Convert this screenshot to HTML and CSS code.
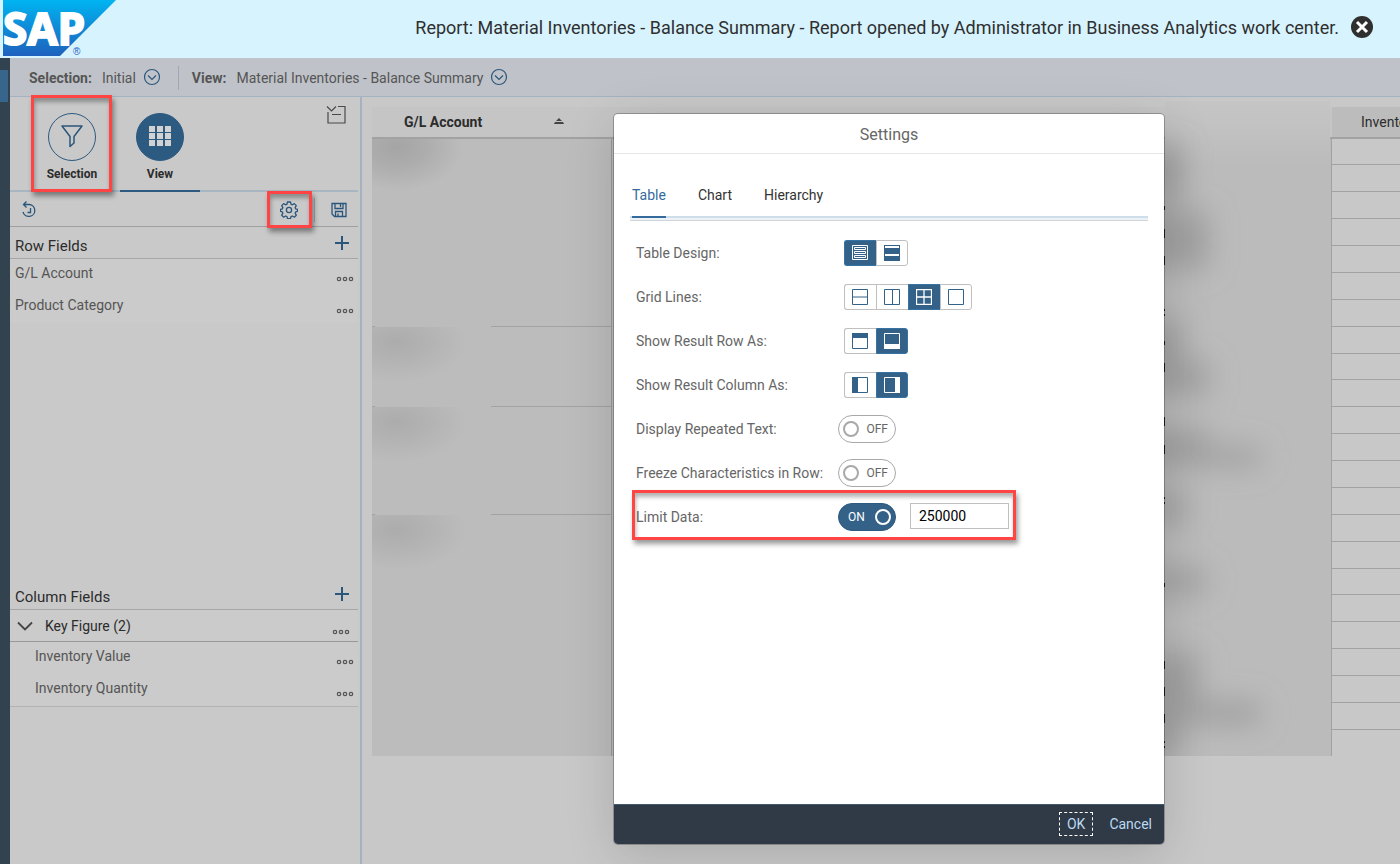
FILE: index.html
```html
<!DOCTYPE html>
<html lang="en">
<head>
    <meta charset="UTF-8">
    <meta name="viewport" content="width=device-width, initial-scale=1.0">
    <title>Material Inventories - Balance Summary</title>
    <link rel="stylesheet" href="styles.css">
</head>
<body>
    <!-- Shared icons -->
    <svg class="defs" width="0" height="0" aria-hidden="true">
        <symbol id="dots" viewBox="0 0 18 6">
            <g fill="none" stroke="#555" stroke-width="1.2"><circle cx="3" cy="3" r="1.7"/><circle cx="9" cy="3" r="1.7"/><circle cx="15" cy="3" r="1.7"/></g>
        </symbol>
        <symbol id="drop" viewBox="0 0 18 18">
            <g fill="none" stroke="#2b567b" stroke-width="1.2"><circle cx="9" cy="9" r="7.5"/><path d="M5 7.5l4 4 4-4"/></g>
        </symbol>
        <symbol id="plus" viewBox="0 0 16 16">
            <path d="M8 1v14M1 8h14" stroke="#2b567b" stroke-width="2"/>
        </symbol>
    </svg>

    <header class="banner">
        <svg class="logo" width="116" height="58" viewBox="0 0 116 58" role="img" aria-label="SAP">
            <defs>
                <linearGradient id="sapBlue" x1="0" y1="0" x2="0" y2="1">
                    <stop offset="0" stop-color="#00b4f1"/>
                    <stop offset="1" stop-color="#1e61bd"/>
                </linearGradient>
            </defs>
            <path d="M3 0h113L60 56H3z" fill="url(#sapBlue)"/>
            <text class="logo-text" x="3" y="45">SAP</text>
            <text class="logo-mark" x="73" y="55">®</text>
        </svg>
        <p>Report: Material Inventories - Balance Summary - Report opened by Administrator in Business Analytics work center.</p>
        <button type="button" class="icon-btn" aria-label="Close">
            <svg width="22" height="22" viewBox="0 0 22 22"><circle cx="11" cy="11" r="11" fill="#2f2f2f"/><path d="M6 6l10 10M16 6L6 16" stroke="#fff" stroke-width="3"/></svg>
        </button>
    </header>

    <div class="workspace">
        <div class="rail"><span class="rail-active"></span></div>
        <div class="content">
            <div class="context-bar">
                <strong>Selection:</strong>
                <span>Initial</span>
                <button type="button" class="icon-btn" aria-label="Choose selection"><svg width="18" height="18"><use href="#drop"/></svg></button>
                <span class="separator"></span>
                <strong>View:</strong>
                <span>Material Inventories - Balance Summary</span>
                <button type="button" class="icon-btn" aria-label="Choose view"><svg width="18" height="18"><use href="#drop"/></svg></button>
            </div>

            <div class="columns">
                <aside class="panel">
                    <nav class="panel-tabs">
                        <button type="button" class="panel-tab">
                            <span class="circle">
                                <svg width="24" height="24" viewBox="0 0 24 24"><path d="M2 1h20L14 11.500V18l-4 3.500v-10z" fill="none" stroke="#2b567b" stroke-width="1.5" stroke-linejoin="round"/></svg>
                            </span>
                            Selection
                            <span class="highlight highlight-tab"></span>
                        </button>
                        <button type="button" class="panel-tab active">
                            <span class="circle">
                                <svg width="24" height="24" viewBox="0 0 24 24"><path d="M1 1h6v6H1zM9 1h6v6H9zM17 1h6v6h-6zM1 8h6v6H1zM9 8h6v6H9zM17 8h6v6h-6zM1 15h6v6H1zM9 15h6v6H9zM17 15h6v6h-6z" fill="#d2d2d2"/></svg>
                            </span>
                            View
                        </button>
                        <button type="button" class="icon-btn collapse" aria-label="Collapse all">
                            <svg width="20" height="20" viewBox="0 0 20 20"><path d="M1 1.500l4.500 4.500L10 1.500M12 1.500h7v16.500H2V7M6 9.500h9" fill="none" stroke="#4a4a4a" stroke-width="1.2"/></svg>
                        </button>
                    </nav>

                    <div class="toolbar">
                        <button type="button" class="icon-btn undo" aria-label="Reset">
                            <svg width="18" height="18" viewBox="0 0 18 18"><path d="M3 3.500h5.500a6 6 0 1 1-6.500 7.500M5.500.5l-3 3 3 3M9.500 7v4.500H6.500" fill="none" stroke="#2b567b" stroke-width="1.3"/></svg>
                        </button>
                        <button type="button" class="icon-btn settings" aria-label="Settings">
                            <svg width="18" height="18" viewBox="0 0 18 18"><g fill="none" stroke="#2b567b" stroke-width="1.3" stroke-linejoin="round"><path d="M7.500 1h3l.5 2.200 1.300.6 2-1.200 2 2-1.200 2 .6 1.300 1.800.4v2l-1.800.6-.6 1.300 1.200 2-2 2-2-1.200-1.300.6-.5 2h-3l-.5-2-1.300-.6-2 1.200-2-2 1.200-2-.6-1.300-1.800-.6v-2l1.800-.4.6-1.300-1.200-2 2-2 2 1.200L7 3.200z"/><circle cx="9" cy="9" r="2.600"/></g></svg>
                            <span class="highlight highlight-settings"></span>
                        </button>
                        <span class="separator"></span>
                        <button type="button" class="icon-btn" aria-label="Save">
                            <svg width="16" height="16" viewBox="0 0 16 16"><path d="M1 1.500h14v13H3.500L1 12zM4 1.500v5h8v-5M4.500 14.500v-5h7v5M7 14v-2.500M9.500 2v3" fill="none" stroke="#2b567b" stroke-width="1.300"/></svg>
                        </button>
                    </div>

                    <section class="fields row-fields">
                        <h2>Row Fields <button type="button" class="icon-btn" aria-label="Add row field"><svg width="16" height="16"><use href="#plus"/></svg></button></h2>
                        <ul>
                            <li>G/L Account <button type="button" class="icon-btn more" aria-label="More"><svg width="18" height="6"><use href="#dots"/></svg></button></li>
                            <li>Product Category <button type="button" class="icon-btn more" aria-label="More"><svg width="18" height="6"><use href="#dots"/></svg></button></li>
                        </ul>
                    </section>

                    <section class="fields column-fields">
                        <h2>Column Fields <button type="button" class="icon-btn" aria-label="Add column field"><svg width="16" height="16"><use href="#plus"/></svg></button></h2>
                        <h3>
                            <svg width="16" height="10" viewBox="0 0 16 10"><path d="M1 1.500l7 7 7-7" fill="none" stroke="#444" stroke-width="1.800"/></svg>
                            Key Figure (2)
                            <button type="button" class="icon-btn more" aria-label="More"><svg width="18" height="6"><use href="#dots"/></svg></button>
                        </h3>
                        <ul>
                            <li>Inventory Value <button type="button" class="icon-btn more" aria-label="More"><svg width="18" height="6"><use href="#dots"/></svg></button></li>
                            <li>Inventory Quantity <button type="button" class="icon-btn more" aria-label="More"><svg width="18" height="6"><use href="#dots"/></svg></button></li>
                        </ul>
                    </section>
                </aside>

                <main class="report">
                    <table>
                        <colgroup>
                            <col class="col-account">
                            <col class="col-product">
                            <col class="col-value">
                        </colgroup>
                        <thead>
                            <tr>
                                <th class="account"><span>G/L Account</span><svg width="10" height="8" viewBox="0 0 10 8"><path d="M5 0l3 3H2zM1 4h8l1 2H0z" fill="#444"/></svg></th>
                                <th></th>
                                <th class="value">Inventory Value</th>
                            </tr>
                        </thead>
                        <tbody>
                            <tr>
                                <td rowspan="7" class="masked first"></td>
                                <td rowspan="23" class="product">
                                    <!-- Masked product texts -->
                                    <svg class="smear" width="167" height="655" viewBox="0 0 167 655" aria-hidden="true">
                                        <defs>
                                            <filter id="soft" x="-50%" y="-50%" width="200%" height="200%"><feGaussianBlur stdDeviation="14"/></filter>
                                            <linearGradient id="fade" x1="0" y1="0" x2="0" y2="1">
                                                <stop offset="0" stop-color="#c5c5c5"/>
                                                <stop offset=".4" stop-color="#c2c2c2"/>
                                                <stop offset="1" stop-color="#bbb"/>
                                            </linearGradient>
                                        </defs>
                                        <path d="M1 0h165v64H1z" fill="url(#fade)"/>
                                        <g fill="#909090" filter="url(#soft)">
                                            <path d="M-20 45h38v55h-38zM-20 110h65v58h-65zM-20 220h38v40h-38zM-20 260h65v34h-65zM-20 328h65v22h-65zM-20 346h116v20h-116zM-20 392h42v30h-42zM-20 468h62v24h-62zM-20 552h55v50h-55zM-20 600h116v24h-116zM-20 622h35v33h-35z" opacity=".6"/>
                                        </g>
                                        <path d="M.5 105v4M.5 128v9M.5 155v9M.5 208v2M.5 213v2M.5 240v4M.5 262v9M.5 316v9M.5 344v9M.5 396v2M.5 401v2M.5 482v4M.5 560v8M.5 586v9M.5 613v9M.5 640v2M.5 645v2" stroke="#222"/>
                                    </svg>
                                </td>
                                <td></td>
                            </tr>
                            <tr><td></td></tr>
                            <tr><td></td></tr>
                            <tr><td></td></tr>
                            <tr><td></td></tr>
                            <tr><td></td></tr>
                            <tr><td></td></tr>
                            <tr><td rowspan="3" class="masked"></td><td></td></tr>
                            <tr><td></td></tr>
                            <tr><td></td></tr>
                            <tr><td rowspan="4" class="masked"></td><td></td></tr>
                            <tr><td></td></tr>
                            <tr><td></td></tr>
                            <tr><td></td></tr>
                            <tr><td rowspan="9" class="masked last"></td><td></td></tr>
                            <tr><td></td></tr>
                            <tr><td></td></tr>
                            <tr><td></td></tr>
                            <tr><td></td></tr>
                            <tr><td></td></tr>
                            <tr><td></td></tr>
                            <tr><td></td></tr>
                            <tr><td></td></tr>
                        </tbody>
                    </table>
                </main>
            </div>
        </div>
    </div>

    <form class="dialog" role="dialog" aria-labelledby="dialogTitle">
        <h1 id="dialogTitle">Settings</h1>
        <nav class="dialog-tabs">
            <a href="#table" class="active">Table</a>
            <a href="#chart">Chart</a>
            <a href="#hierarchy">Hierarchy</a>
        </nav>

        <div class="settings-list" id="table">
            <div class="setting">
                <span id="designLabel">Table Design:</span>
                <div class="segmented" role="radiogroup" aria-labelledby="designLabel">
                    <label><input type="radio" name="design" aria-label="Standard" checked>
                        <svg width="16" height="16" viewBox="0 0 16 16"><path d="M.5.5h15v14H.5zM2.500 2.500h11v2h-11zM2.500 6.500h11v2h-11zM2.500 10.500h11v2h-11z" fill="none" stroke="#fff"/></svg></label>
                    <label><input type="radio" name="design" aria-label="Alternating">
                        <svg width="16" height="16" viewBox="0 0 16 16"><path d="M0 0h16v16H0z" fill="#346187"/><path d="M1 1h14v2H1zM1 9h14v2H1z" fill="#fff"/></svg></label>
                </div>
            </div>
            <div class="setting">
                <span id="gridLabel">Grid Lines:</span>
                <div class="segmented" role="radiogroup" aria-labelledby="gridLabel">
                    <label><input type="radio" name="grid" aria-label="Horizontal">
                        <svg width="16" height="16" viewBox="0 0 16 16"><path d="M.5.5h15v15H.5zM0 8h16" fill="none" stroke="#346187"/></svg></label>
                    <label><input type="radio" name="grid" aria-label="Vertical">
                        <svg width="16" height="16" viewBox="0 0 16 16"><path d="M.5.5h15v15H.5zM8.500 0v16" fill="none" stroke="#346187"/></svg></label>
                    <label><input type="radio" name="grid" aria-label="All" checked>
                        <svg width="16" height="16" viewBox="0 0 16 16"><path d="M.5.5h15v15H.5zM0 8h16M8 0v16" fill="none" stroke="#fff" stroke-width="1.300"/></svg></label>
                    <label><input type="radio" name="grid" aria-label="None">
                        <svg width="16" height="16" viewBox="0 0 16 16"><path d="M.5.5h15v15H.5z" fill="none" stroke="#346187"/></svg></label>
                </div>
            </div>
            <div class="setting">
                <span id="rowLabel">Show Result Row As:</span>
                <div class="segmented" role="radiogroup" aria-labelledby="rowLabel">
                    <label><input type="radio" name="row" aria-label="First row">
                        <svg width="16" height="16" viewBox="0 0 16 16"><path d="M.5.5h15v15H.5z" fill="none" stroke="#346187"/><path d="M0 0h16v5H0z" fill="#346187"/></svg></label>
                    <label><input type="radio" name="row" aria-label="Last row" checked>
                        <svg width="16" height="16" viewBox="0 0 16 16"><path d="M.5.5h15v15H.5z" fill="none" stroke="#fff"/><path d="M0 11h16v5H0z" fill="#fff"/></svg></label>
                </div>
            </div>
            <div class="setting">
                <span id="columnLabel">Show Result Column As:</span>
                <div class="segmented" role="radiogroup" aria-labelledby="columnLabel">
                    <label><input type="radio" name="column" aria-label="First column">
                        <svg width="16" height="16" viewBox="0 0 16 16"><path d="M.5.5h15v15H.5z" fill="none" stroke="#346187"/><path d="M0 0h6v16H0z" fill="#346187"/></svg></label>
                    <label><input type="radio" name="column" aria-label="Last column" checked>
                        <svg width="16" height="16" viewBox="0 0 16 16"><path d="M.5.5h15v15H.5z" fill="none" stroke="#fff"/><path d="M11 0h5v16h-5z" fill="#fff"/></svg></label>
                </div>
            </div>
            <div class="setting">
                <label for="repeated">Display Repeated Text:</label>
                <label class="switch"><input type="checkbox" id="repeated"><span>OFF</span></label>
            </div>
            <div class="setting">
                <label for="freeze">Freeze Characteristics in Row:</label>
                <label class="switch"><input type="checkbox" id="freeze"><span>OFF</span></label>
            </div>
            <div class="setting">
                <label for="limit">Limit Data:</label>
                <label class="switch"><input type="checkbox" id="limit" checked><span>ON</span></label>
                <input type="text" class="limit-value" value="250000" aria-label="Maximum number of rows">
                <span class="highlight highlight-limit"></span>
            </div>
        </div>

        <footer>
            <button type="button" class="focused">OK</button>
            <button type="button">Cancel</button>
        </footer>
    </form>
</body>
</html>
```
FILE: styles.css
```css
*, *::before {
    box-sizing: border-box;
}
body {
    margin: 0;
    min-height: 100vh;
    display: flex;
    flex-direction: column;
    position: relative;
    overflow: hidden;
    font-family: Roboto, "Liberation Sans", sans-serif;
    font-size: 14px;
    color: #555;
    background: #c8c8c8;
}
h1, h2, h3, p, ul {
    margin: 0;
    padding: 0;
    font-weight: normal;
}
ul {
    list-style: none;
}
button, input {
    font: inherit;
}
svg {
    display: block;
}
.defs {
    position: absolute;
}
.icon-btn {
    padding: 0;
    border: none;
    background: none;
    cursor: pointer;
}

/* Banner */
.banner {
    display: flex;
    align-items: center;
    gap: 12px;
    height: 58px;
    padding-right: 27px;
    background: #d7f3fe;
    color: #2f2f2f;
    font-size: 18px;
}
.logo {
    align-self: flex-start;
    margin-right: auto;
    overflow: visible;
}
.logo-text {
    font: bold 44px "Noto Sans", "Open Sans", sans-serif;
    fill: #fff;
    stroke: #fff;
    stroke-width: 2px;
}
.logo-mark {
    font: 10px "Liberation Sans", sans-serif;
    fill: #1e61bd;
}
.banner p, .banner .icon-btn {
    margin-bottom: 4px;
}

/* Workspace */
.workspace {
    flex: 1;
    display: flex;
}
.rail {
    width: 10px;
    padding-top: 12px;
    background: #33424f;
}
.rail-active {
    display: block;
    width: 8px;
    height: 32px;
    background: #38658c;
}
.content {
    flex: 1;
    min-width: 0;
    display: flex;
    flex-direction: column;
}
.context-bar {
    display: flex;
    align-items: center;
    gap: 10px;
    height: 39px;
    padding: 2px 0 0 19px;
    background: #bfc3c9;
    border-bottom: 1px solid #a4b3c2;
}
.separator {
    width: 1px;
    height: 24px;
    background: #a3a6aa;
}
.context-bar .icon-btn {
    margin: 0 0 2px -3px;
}
.context-bar .separator {
    margin: 0 3px 0 7px;
}
.columns {
    flex: 1;
    display: flex;
}

/* Side panel */
.panel {
    flex: none;
    width: 352px;
    padding-right: 2px;
    border-right: 2px solid #a5b2c1;
    background: #c9c9c9;
}
.panel-tabs {
    position: relative;
    display: flex;
    gap: 8px;
    height: 95px;
    padding-left: 22px;
    border-bottom: 2px solid #a8b6c2;
}
.panel-tab {
    position: relative;
    display: flex;
    flex-direction: column;
    align-items: center;
    gap: 6px;
    width: 80px;
    height: 95px;
    padding: 16px 0 0;
    border: none;
    border-bottom: 2px solid transparent;
    background: none;
    font-size: 12px;
    font-weight: bold;
    color: #2c2c2c;
}
.panel-tab.active {
    border-bottom-color: #2d5a80;
}
.circle {
    display: flex;
    align-items: center;
    justify-content: center;
    width: 48px;
    height: 48px;
    border: 1px solid #2d5a80;
    border-radius: 50%;
}
.active .circle {
    background: #2d5a80;
}
.collapse {
    align-self: flex-start;
    margin: 8px 12px 0 auto;
}
.toolbar {
    display: flex;
    align-items: center;
    gap: 16px;
    height: 35px;
    padding: 2px 11px 0;
    border-bottom: 1px solid #a0a0a0;
}
.undo {
    margin-right: auto;
}
.settings {
    position: relative;
}
.row-fields {
    min-height: 351px;
}
.fields h2 {
    display: flex;
    align-items: center;
    justify-content: space-between;
    height: 32px;
    padding: 6px 8px 0 5px;
    border-bottom: 1px solid #a6a6a6;
    font-size: 15px;
    color: #2c2c2c;
}
.fields h2 .icon-btn {
    margin-bottom: 6px;
}
.fields li, .fields h3 {
    display: flex;
    align-items: center;
    height: 32px;
    padding: 0 4px 4px 5px;
    background: #cbcbcb;
}
.fields .more {
    margin: 12px 0 0 auto;
}
.fields h3 {
    gap: 12px;
    padding: 0 8px 0 7px;
    border-bottom: 1px solid #999;
    font-size: 14px;
    color: #2c2c2c;
}
.column-fields li {
    padding-left: 25px;
}
.column-fields ul {
    border-bottom: 1px solid #b2b2b2;
}

/* Report table */
.report {
    flex: 1;
    min-width: 0;
    padding: 10px 0 0 10px;
    overflow: hidden;
}
table {
    width: 1109px;
    table-layout: fixed;
    border-collapse: separate;
    border-spacing: 0;
}
.col-account {
    width: 240px;
}
.col-product {
    width: 720px;
}
.col-value {
    width: 149px;
}
th {
    height: 32px;
    padding: 0;
    border-bottom: 2px solid #a2a2a2;
    background: #c5c5c5;
    color: #2c2c2c;
    text-align: left;
}
th.account {
    position: relative;
    padding-left: 32px;
}
th.account svg {
    position: absolute;
    right: 48px;
    top: 11px;
}
th.value {
    padding-left: 29px;
    background: #bcbcbc;
    font-weight: normal;
}
td {
    padding: 0;
    border-bottom: 1px solid #a2a2a2;
}
tbody tr {
    height: 27px;
}
tbody tr:nth-child(8n + 1), tbody tr:last-child {
    height: 26px;
}
tbody tr:last-child td {
    border-bottom: none;
}
/* the row line stops where the account text is masked */
td.masked {
    border-right: 1px solid #999;
    border-bottom: none;
    background: linear-gradient(#a2a2a2, #a2a2a2) 0 100% / 3px 1px no-repeat,
        linear-gradient(#a2a2a2, #a2a2a2) 119px 100% / 100% 1px no-repeat,
        radial-gradient(ellipse 70px 40px at 25px 15px, #acacac, #b2b2b2 40%, #bcbcbc) #bcbcbc;
}
td.masked.first {
    background: linear-gradient(#a2a2a2, #a2a2a2) 0 100% / 3px 1px no-repeat,
        linear-gradient(#a2a2a2, #a2a2a2) 119px 100% / 100% 1px no-repeat,
        radial-gradient(ellipse 66px 44px at 25px 8px, #a5a5a5, #adadad 45%, #bcbcbc) #bcbcbc;
}
td.masked.last {
    background: radial-gradient(ellipse 70px 40px at 25px 15px, #acacac, #b2b2b2 40%, #bcbcbc) #bcbcbc;
}
td.product {
    position: relative;
    border-right: 1px solid #a2a2a2;
    border-bottom: none;
    background: #bbb;
}
.smear {
    position: absolute;
    right: 0;
    bottom: 0;
}

/* Settings dialog */
.dialog {
    position: absolute;
    top: 114px;
    bottom: 20px;
    left: 614px;
    width: 550px;
    display: flex;
    flex-direction: column;
    border-radius: 4px;
    background: #fff;
    box-shadow: 0 0 0 1px rgba(0,0,0,0.25), 0 10px 50px rgba(0,0,0,0.15);
    color: #666;
}
.dialog h1 {
    height: 40px;
    border-bottom: 1px solid #e5e5e5;
    font-size: 16px;
    line-height: 42px;
    text-align: center;
}
.dialog-tabs {
    display: flex;
    gap: 32px;
    height: 67px;
    margin: 0 16px;
    padding: 0 2px;
    border-bottom: 1px solid #d0d5da;
    background: linear-gradient(#cfdeeb, #cfdeeb) 0 62px / 100% 2px no-repeat,
        linear-gradient(#edf2f7, #edf2f7) 0 64px / 100% 2px no-repeat;
}
.dialog-tabs a {
    height: 64px;
    line-height: 82px;
    color: #333;
    text-decoration: none;
}
.dialog-tabs a.active {
    border-bottom: 2px solid #346a9c;
    color: #346a9c;
}
.settings-list {
    flex: 1;
    padding: 10px 22px;
}
.setting {
    position: relative;
    display: grid;
    grid-template-columns: 202px 58px 1fr;
    align-items: center;
    height: 44px;
}
.segmented {
    display: flex;
    margin-left: 6px;
}
.segmented label {
    flex: none;
    display: flex;
    align-items: center;
    justify-content: center;
    width: 32px;
    height: 26px;
    padding-right: 1px;
    border: 1px solid #bfbfbf;
    border-right-width: 0;
    background: #fff;
}
.segmented label:first-child {
    border-radius: 3px 0 0 3px;
}
.segmented label:last-child {
    padding-right: 0;
    border-right-width: 1px;
    border-radius: 0 3px 3px 0;
}
.segmented label:has(input:checked) {
    border-color: #3673a5;
    background: #346187;
}
.segmented input, .switch input {
    position: absolute;
    opacity: 0;
}
.switch {
    display: flex;
    align-items: center;
    width: 58px;
    height: 28px;
    padding: 0 7px 0 4px;
    border: 1px solid #a8a8a8;
    border-radius: 14px;
    font-size: 12px;
}
.switch span {
    flex: 1;
    display: flex;
    align-items: center;
    justify-content: space-between;
}
.switch span::before {
    content: "";
    width: 16px;
    height: 16px;
    border: 2px solid #a8a8a8;
    border-radius: 50%;
}
.switch:has(input:checked) {
    padding: 0 4px 0 9px;
    border-color: #2d5a80;
    background: #346187;
    color: #fff;
}
.switch input:checked + span::before {
    order: 1;
    border-color: #fff;
}
.limit-value {
    width: 99px;
    height: 26px;
    margin: 0 0 2px 14px;
    padding: 0 8px;
    border: 1px solid #bfbfbf;
    color: #000;
}
.dialog footer {
    display: flex;
    align-items: center;
    justify-content: flex-end;
    gap: 8px;
    height: 40px;
    padding: 0 4px 1px 0;
    border-top: 1px solid #43596b;
    border-radius: 0 0 4px 4px;
    background: #2f3a46;
}
.dialog footer button {
    height: 24px;
    padding: 0 7px;
    border: 1px solid transparent;
    background: none;
    color: #bcd9f2;
}
.dialog footer .focused {
    border: 1px dashed #fff;
}

/* Callout frames */
.highlight {
    position: absolute;
    border: 3px solid #ff4444;
    box-shadow: 2px 4px 5px rgba(0,0,0,0.4), inset 1px 4px 4px rgba(0,0,0,0.3);
    pointer-events: none;
}
.highlight-tab {
    inset: -2px 0 -2px -1px;
}
.highlight-settings {
    inset: -10px -14px -9px -13px;
}
.highlight-limit {
    inset: -5px 126px -1px -4px;
}
```
